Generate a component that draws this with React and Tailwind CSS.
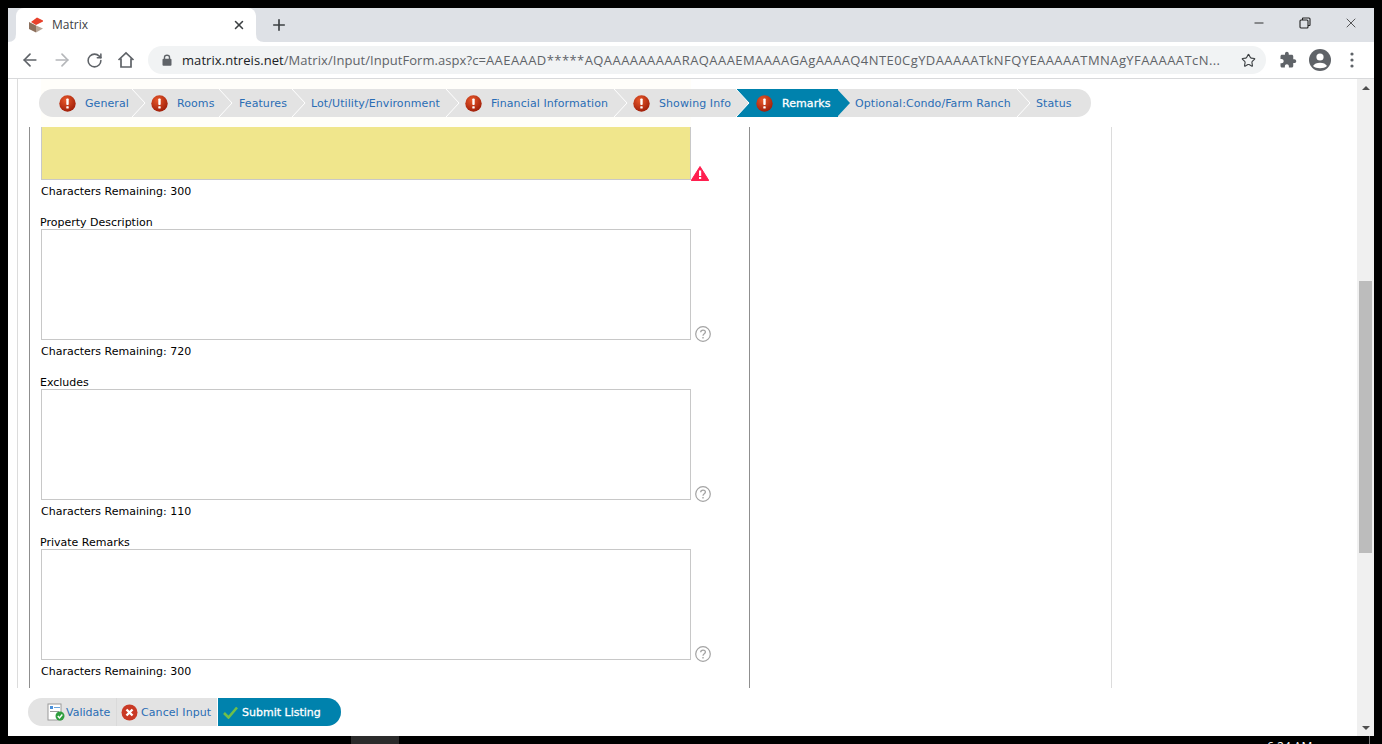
import { ArrowLeft, ArrowRight, RotateCw, Star, X, Plus, Minus } from "lucide-react";

const ui = "font-['Open_Sans',sans-serif]";
const page = "font-['DejaVu_Sans',sans-serif]";

const steps = [
  { label: "General", alert: true, w: "w-[94px] pl-[20px]" },
  { label: "Rooms", alert: true, w: "w-[87px] pl-[18px]" },
  { label: "Features", w: "w-[73px] pl-[19px]" },
  { label: "Lot/Utility/Environment", w: "w-[154px] pl-[18px]" },
  { label: "Financial Information", alert: true, w: "w-[168px] pl-[18px]" },
  { label: "Showing Info", alert: true, w: "w-[122px] pl-[18px]" },
  { label: "Remarks", alert: true, active: true, w: "w-[101px] pl-[19px]" },
  { label: "Optional:Condo/Farm Ranch", w: "w-[180px] pl-[17px]" },
  { label: "Status", w: "w-[73px] pl-[18px]" },
];

const fields = [
  { label: "Property Description", remaining: 720 },
  { label: "Excludes", remaining: 110 },
  { label: "Private Remarks", remaining: 300 },
];

const AlertDot = ({ size = 17 }) => (
  <svg width={size} height={size} viewBox="0 0 17 17" className="shrink-0">
    <defs>
      <radialGradient id="alertDot" cx="40%" cy="30%" r="75%">
        <stop offset="0%" stopColor="#e8582a" />
        <stop offset="100%" stopColor="#9c1c08" />
      </radialGradient>
    </defs>
    <circle cx="8.5" cy="8.5" r="8.2" fill="url(#alertDot)" />
    <rect x="7.3" y="3.5" width="2.4" height="6.5" rx="0.8" fill="#fff" />
    <rect x="7.3" y="11.2" width="2.4" height="2.4" rx="0.6" fill="#fff" />
  </svg>
);

const Chevron = ({ active }) => (
  <svg width="14" height="28" viewBox="0 0 14 28" className="absolute -right-[13px] top-0 z-10">
    <path
      d="M0 0 L13 14 L0 28"
      fill={active ? "#0082ad" : "#e3e3e3"}
      stroke={active ? "none" : "#fff"}
      strokeWidth="1"
    />
  </svg>
);

const Step = ({ step, last }) => (
  <div
    className={`relative flex h-full shrink-0 items-center pt-0.5 tracking-[0.08px] ${step.w} ${
      step.active ? "bg-[#0082ad] text-white [-webkit-text-stroke:0.3px_white]" : "text-[#2a6db5]"
    }`}
  >
    {step.alert && (
      <span className="mr-[9px] flex -mt-0.5">
        <AlertDot />
      </span>
    )}
    <span className="whitespace-nowrap">{step.label}</span>
    {!last && <Chevron active={step.active} />}
  </div>
);

const HelpIcon = () => (
  <svg width="16" height="16" viewBox="0 0 16 16" className="ml-1 mb-[-2px] shrink-0">
    <circle cx="8" cy="8" r="7.3" fill="#fff" stroke="#a3a3a3" strokeWidth="1.2" />
    <path d="M5.7 6.2 C5.7 3.4 10.4 3.4 10.4 6.1 C10.4 7.9 8 7.7 8 9.8" fill="none" stroke="#a3a3a3" strokeWidth="1.3" />
    <rect x="7.3" y="11" width="1.4" height="1.5" fill="#a3a3a3" />
  </svg>
);

const WarnIcon = () => (
  <svg width="18" height="15" viewBox="0 0 18 15" className="mb-[-1px] shrink-0">
    <path d="M9 0.5 L17.8 14.5 L0.2 14.5 Z" fill="#ff1f4f" stroke="#ff1f4f" strokeLinejoin="round" />
    <rect x="8" y="4.5" width="2.2" height="5.5" fill="#fff" />
    <rect x="8" y="11" width="2.2" height="2" fill="#fff" />
  </svg>
);

const Check = () => (
  <svg width="15" height="13" viewBox="0 0 15 13" className="mr-1 shrink-0">
    <path d="M1 7 L5.5 11.5 L14 1.5" fill="none" stroke="#6fbf4a" strokeWidth="2.6" />
  </svg>
);

const Field = ({ label, remaining }) => (
  <div className="mt-[17px]">
    <div className="h-[13px] leading-[13px] -ml-px">{label}</div>
    <div className="flex items-end">
      <div className="h-[111px] w-[650px] border border-[#c8c8c8] bg-white" />
      <HelpIcon />
    </div>
    <div className="mt-[5px] h-[14px] leading-[14px]">Characters Remaining: {remaining}</div>
  </div>
);

const ToolBtn = ({ children }) => (
  <div className="flex h-8 w-8 shrink-0 items-center justify-center">{children}</div>
);

export default function App() {
  return (
    <div className="relative h-[744px] w-[1382px] overflow-hidden bg-black">
      <div className="flex h-[736px] flex-col px-2 pt-2">
        {/* chrome tabs */}
        <div className={`flex h-[34px] shrink-0 bg-[#dee1e6] text-[#3c4043] ${ui}`}>
          <div className="relative ml-2 flex h-[34px] w-[240px] items-center rounded-t-lg bg-white pl-[12px] pr-2 text-[12px]">
            {/* flares where the tab meets the toolbar */}
            <svg width="8" height="8" viewBox="0 0 8 8" className="absolute -left-2 bottom-0">
              <path d="M8 0 Q8 8 0 8 L8 8 Z" fill="#fff" />
            </svg>
            <svg width="8" height="8" viewBox="0 0 8 8" className="absolute -right-2 bottom-0">
              <path d="M0 0 Q0 8 8 8 L0 8 Z" fill="#fff" />
            </svg>
            <svg width="16" height="16" viewBox="0 0 16 16" className="mr-2 shrink-0">
              <path d="M9 0.5 L15 3.5 L15 4.5 L8 8 L3 5 Z" fill="#e8412c" />
              <path d="M1 5 L8 8.5 L8 15.5 L1 12 Z" fill="#8c6f5c" />
              <path d="M8 8.5 L15 11.5 L8 15.5 Z" fill="#b8a596" />
            </svg>
            <span className="flex-1">Matrix</span>
            <X size={14} strokeWidth={2.6} className="mr-0.5" />
          </div>
          <div className="ml-[14px] flex items-center">
            <Plus size={18} strokeWidth={2.2} />
          </div>
          <div className="ml-auto flex items-start text-[#222]">
            <div className="flex h-[30px] w-[46px] items-center justify-center">
              <Minus size={14} strokeWidth={1.6} />
            </div>
            <div className="flex h-[30px] w-[46px] items-center justify-center">
              <svg width="12" height="12" viewBox="0 0 12 12" fill="none" stroke="#222" strokeWidth="1.1">
                <rect x="1" y="3" width="8" height="8" rx="1" />
                <path d="M3.5 3 V1.5 Q3.5 1 4 1 H10 Q11 1 11 2 V8 Q11 8.5 10.5 8.5 H9" />
              </svg>
            </div>
            <div className="flex h-[30px] w-[46px] items-center justify-center">
              <X size={16} strokeWidth={1.1} />
            </div>
          </div>
        </div>

        {/* chrome toolbar */}
        <div className={`flex h-[37px] shrink-0 items-center border-b border-[#d8d9db] bg-white text-[#5f6368] ${ui}`}>
          <div className="ml-1.5 flex w-[134px] items-center">
            <ToolBtn><ArrowLeft size={20} strokeWidth={2} /></ToolBtn>
            <ToolBtn><ArrowRight size={20} strokeWidth={2} className="text-[#b5b7ba]" /></ToolBtn>
            <ToolBtn><RotateCw size={17} strokeWidth={2.2} /></ToolBtn>
            <ToolBtn>
              <svg width="18" height="18" viewBox="0 0 18 18" fill="none" stroke="#5f6368" strokeWidth="1.7">
                <path d="M1.5 9 L9 2 L16.5 9 M4 7.5 V16 H14 V7.5" />
              </svg>
            </ToolBtn>
          </div>
          <div className="flex h-[28px] w-[1118px] shrink-0 items-center rounded-full bg-[#f1f3f4] pl-[14px] pr-[10px] text-[13px]">
            <svg width="10" height="12" viewBox="0 0 10 12" className="mr-[10px] shrink-0">
              <path d="M2.5 5 V3.2 C2.5 0.6 7.5 0.6 7.5 3.2 V5" fill="none" stroke="#5f6368" strokeWidth="1.4" />
              <rect x="0.5" y="4.8" width="9" height="7" rx="1" fill="#5f6368" />
            </svg>
            <span className="flex-1 overflow-hidden whitespace-nowrap pt-px tracking-[0.06px]">
              <span className="text-[#202124]">matrix.ntreis.net</span>
              /Matrix/Input/InputForm.aspx?c=
              <span className="tracking-[0.43px]">
                AAEAAAD*****AQAAAAAAAAARAQAAAEMAAAAGAgAAAAQ4NTE0CgYDAAAAATkNFQYEAAAAATMNAgYFAAAAATcN...
              </span>
            </span>
            <Star size={15} strokeWidth={1.8} className="ml-[12px] shrink-0 text-[#3c4043]" />
          </div>
          <div className="ml-1.5 flex items-center">
            <ToolBtn>
              <svg width="18" height="18" viewBox="0 0 24 24" fill="#5f6368">
                <path d="M20.5 11H19V7c0-1.1-.9-2-2-2h-4V3.5C13 2.12 11.88 1 10.5 1S8 2.12 8 3.5V5H4c-1.1 0-1.99.9-1.99 2v3.8H3.5c1.49 0 2.7 1.21 2.7 2.7s-1.21 2.7-2.7 2.7H2V20c0 1.1.9 2 2 2h3.8v-1.5c0-1.49 1.21-2.7 2.7-2.7 1.49 0 2.7 1.21 2.7 2.7V22H17c1.1 0 2-.9 2-2v-4h1.5c1.38 0 2.5-1.12 2.5-2.5S21.88 11 20.5 11z" />
              </svg>
            </ToolBtn>
            <ToolBtn>
              <svg width="24" height="24" viewBox="0 0 24 24">
                <circle cx="12" cy="12" r="11" fill="#5f6368" />
                <circle cx="12" cy="9" r="3.6" fill="#fff" />
                <path d="M5 18 C7 13.5 17 13.5 19 18 C16 21 8 21 5 18 Z" fill="#fff" />
              </svg>
            </ToolBtn>
            <ToolBtn>
              <svg width="4" height="16" viewBox="0 0 4 16" fill="#5f6368">
                <circle cx="2" cy="2" r="1.6" />
                <circle cx="2" cy="8" r="1.6" />
                <circle cx="2" cy="14" r="1.6" />
              </svg>
            </ToolBtn>
          </div>
        </div>

        {/* page + scrollbar */}
        <div className={`flex min-h-0 flex-1 bg-white text-[11px] text-black ${page}`}>
          <div className="flex min-w-0 flex-1 flex-col">
            <div className="relative h-[48px] shrink-0 pl-[9px]">
              <div className="flex h-full">
                <div className="w-[24px] border-l border-[#dcdcdc]" />
                <div className="h-full w-[650px] bg-[#fffefa]" />
              </div>
              <div className="absolute left-[31px] top-[10px] flex h-[28px] w-[1052px] overflow-clip rounded-full bg-[#e3e3e3]">
                {steps.map((s, i) => (
                  <Step key={s.label} step={s} last={i === steps.length - 1} />
                ))}
              </div>
            </div>
            <div className="flex min-h-0 flex-1">
              <div className="ml-[9px] w-[12px] border-l border-[#dcdcdc]" />
              <div className="w-[721px] border-x border-[#8f8f8f] pl-[11px]">
                <div className="flex items-end">
                  <div className="h-[53px] w-[650px] border border-t-0 border-[#c8c8c8] bg-[#f0e68c]" />
                  <WarnIcon />
                </div>
                <div className="mt-[5px] h-[14px] leading-[14px]">Characters Remaining: 300</div>
                {fields.map((f) => (
                  <Field key={f.label} {...f} />
                ))}
              </div>
              <div className="w-[362px] border-r border-[#dcdcdc]" />
            </div>
            <div className="flex h-[48px] shrink-0 items-center pl-5">
              <div className="flex h-[28px] items-center overflow-hidden rounded-full bg-[#e3e3e3]">
                <div className="flex h-full w-[88px] items-center pl-[19px] text-[#2a6db5]">
                  <svg width="18" height="18" viewBox="0 0 18 18" className="mr-px shrink-0">
                    <rect x="1" y="1" width="13" height="16" fill="#fff" stroke="#9a9a9a" />
                    <rect x="3" y="3" width="3" height="3" fill="#4a90d9" />
                    <rect x="7" y="4" width="6" height="1" fill="#6aa5dd" />
                    <rect x="3" y="8" width="9" height="1" fill="#9a9a9a" />
                    <circle cx="13" cy="13" r="4.5" fill="#2f9e3f" />
                    <path d="M10.8 13 L12.5 15 L15.3 11.5" fill="none" stroke="#fff" strokeWidth="1.4" />
                  </svg>
                  <span className="pt-0.5">Validate</span>
                </div>
                <div className="flex h-full w-[101px] items-center border-l border-[#dadada] text-[#2a6db5] tracking-[0.08px]">
                  <svg width="17" height="17" viewBox="0 0 17 17" className="ml-1 mr-[3px] shrink-0">
                    <circle cx="8.5" cy="8.5" r="8" fill="#c93a26" />
                    <path d="M5.5 5.5 L11.5 11.5 M11.5 5.5 L5.5 11.5" stroke="#fff" strokeWidth="2.4" />
                  </svg>
                  <span className="pt-0.5">Cancel Input</span>
                </div>
                <div className="flex h-full w-[124px] items-center border-l border-white bg-[#0082ad] pl-[5px] text-white [-webkit-text-stroke:0.3px_white]">
                  <Check />
                  <span className="pt-0.5">Submit Listing</span>
                </div>
              </div>
            </div>
          </div>
          {/* scrollbar */}
          <div className="flex w-[17px] shrink-0 flex-col bg-[#f0f0f0]">
            <div className="flex h-[17px] items-center justify-center">
              <div className="h-0 w-0 border-x-[4px] border-b-[4px] border-x-transparent border-b-[#505050]" />
            </div>
            <div className="h-[185px]" />
            <div className="mx-0.5 h-[272px] bg-[#bcbcbc]" />
            <div className="flex-1" />
            <div className="flex h-[17px] items-center justify-center">
              <div className="h-0 w-0 border-x-[4px] border-t-[4px] border-x-transparent border-t-[#505050]" />
            </div>
          </div>
        </div>
      </div>
      {/* taskbar sliver below the window */}
      <div className="absolute left-[351px] top-[736px] h-2 w-12 bg-[#2b2b2b]" />
      <div className={`absolute left-[1267px] top-[739px] text-[12px] leading-4 text-white ${ui}`}>6:24 AM</div>
      <div className="absolute left-[1369px] top-[736px] h-2 w-px bg-[#777]" />
    </div>
  );
}
